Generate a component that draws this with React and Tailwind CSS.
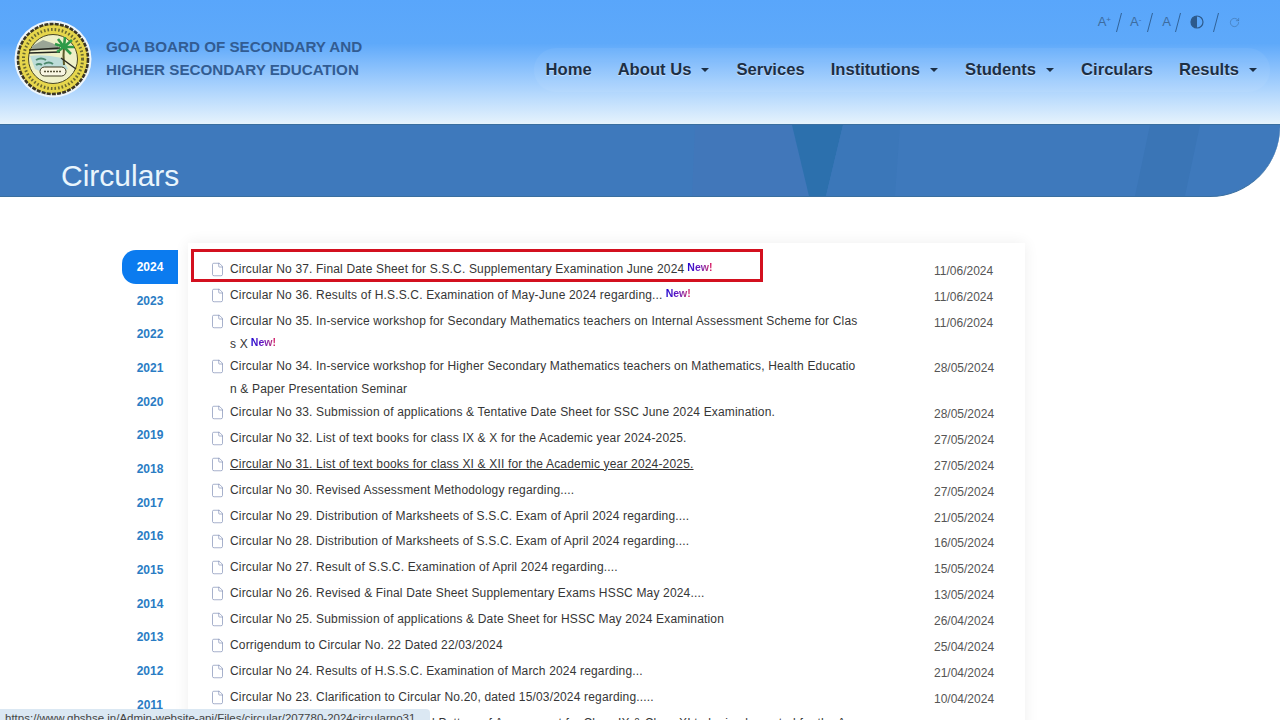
import { File, RotateCw } from 'lucide-react';

const years = [2024, 2023, 2022, 2021, 2020, 2019, 2018, 2017, 2016, 2015, 2014, 2013, 2012, 2011, 2010];

const circulars = [
    { title: 'Circular No 37. Final Date Sheet for S.S.C. Supplementary Examination June 2024', date: '11/06/2024', isNew: true },
    { title: 'Circular No 36. Results of H.S.S.C. Examination of May-June 2024 regarding...', date: '11/06/2024', isNew: true },
    { title: 'Circular No 35. In-service workshop for Secondary Mathematics teachers on Internal Assessment Scheme for Class X', date: '11/06/2024', isNew: true },
    { title: 'Circular No 34. In-service workshop for Higher Secondary Mathematics teachers on Mathematics, Health Education & Paper Presentation Seminar', date: '28/05/2024' },
    { title: 'Circular No 33. Submission of applications & Tentative Date Sheet for SSC June 2024 Examination.', date: '28/05/2024' },
    { title: 'Circular No 32. List of text books for class IX & X for the Academic year 2024-2025.', date: '27/05/2024' },
    { title: 'Circular No 31. List of text books for class XI & XII for the Academic year 2024-2025.', date: '27/05/2024', hover: true },
    { title: 'Circular No 30. Revised Assessment Methodology regarding....', date: '27/05/2024' },
    { title: 'Circular No 29. Distribution of Marksheets of S.S.C. Exam of April 2024 regarding....', date: '21/05/2024' },
    { title: 'Circular No 28. Distribution of Marksheets of S.S.C. Exam of April 2024 regarding....', date: '16/05/2024' },
    { title: 'Circular No 27. Result of S.S.C. Examination of April 2024 regarding....', date: '15/05/2024' },
    { title: 'Circular No 26. Revised & Final Date Sheet Supplementary Exams HSSC May 2024....', date: '13/05/2024' },
    { title: 'Circular No 25. Submission of applications & Date Sheet for HSSC May 2024 Examination', date: '26/04/2024' },
    { title: 'Corrigendum to Circular No. 22 Dated 22/03/2024', date: '25/04/2024' },
    { title: 'Circular No 24. Results of H.S.S.C. Examination of March 2024 regarding...', date: '21/04/2024' },
    { title: 'Circular No 23. Clarification to Circular No.20, dated 15/03/2024 regarding.....', date: '10/04/2024' },
    { title: 'Circular No 22. Revised Syllabus and Pattern of Assessment for Class IX & Class XI to be implemented for the A', date: '22/03/2024' },
];

const navItems = [
    { label: 'Home' },
    { label: 'About Us', caret: true },
    { label: 'Services' },
    { label: 'Institutions', caret: true },
    { label: 'Students', caret: true },
    { label: 'Circulars' },
    { label: 'Results', caret: true },
];

const Logo = () => (
    <svg width="78" height="80" viewBox="0 -1 78 80" className="shrink-0">
        <circle cx="39" cy="40" r="38.5" fill="#eef5fa" />
        <circle cx="39" cy="40" r="35" fill="#e6d64c" stroke="#3a3524" strokeWidth="2.6" strokeDasharray="4 1.2" />
        <circle cx="39" cy="40" r="29.5" fill="none" stroke="#6b6a30" strokeWidth="3" strokeDasharray="1.6 2" />
        <circle cx="39" cy="40" r="24.5" fill="#eef0c8" stroke="#4a4722" strokeWidth="1" />
        <path d="M18 27 L29 21 L38 24 L44 27 L44 31 L18 31 Z" fill="#9aa596" />
        <path d="M15 31 L46 29 M15 34 L46 33" stroke="#24261f" strokeWidth="1.7" />
        <path d="M16 37 Q30 35 48 39 L54 50 Q36 58 21 50 Z" fill="#bcdcd8" />
        <path d="M22 41 q5 -3 10 0 M30 45 q5 -3 9 0 M22 46 q3 -2 6 0" stroke="#4d8a6e" strokeWidth="2" fill="none" />
        <path d="M50 46 Q49 36 50 28" stroke="#5b5a2a" strokeWidth="2" fill="none" />
        <path d="M50 28 L41 25 M50 28 L44 20 M50 28 L51 18 M50 28 L58 21 M50 28 L60 28 M50 28 L57 35 M50 28 L43 33" stroke="#2f9a48" strokeWidth="2.6" />
        <path d="M47 39 L62 50" stroke="#2b2a22" strokeWidth="1.4" />
        <rect x="26" y="48" width="26" height="9" rx="4.5" fill="#f8f6e2" stroke="#3d3a20" strokeWidth="1" />
        <path d="M30 52.5 H48" stroke="#55523a" strokeWidth="1.6" strokeDasharray="2 1" />
    </svg>
);

const Slash = ({ className }) => (
    <svg width="6" height="19" viewBox="0 0 6 19" className={className}>
        <path d="M5.5 0 L0.5 19" stroke="#2d5a8c" strokeWidth="0.9" />
    </svg>
);

const AccessibilityTools = () => (
    <div className="flex items-center text-[#3d6c9f] h-[20px] text-[13px] mr-[40px]">
        <span>A<sup className="text-[8px]">+</sup></span>
        <Slash className="ml-[5px]" />
        <span className="ml-[8px]">A<sup className="text-[8px]">-</sup></span>
        <Slash className="ml-[6px]" />
        <span className="ml-[9px]">A</span>
        <Slash className="ml-[4px]" />
        <svg width="14" height="14" viewBox="0 0 14 14" className="ml-[9px]">
            <circle cx="7" cy="7" r="6" fill="none" stroke="#2d5a8c" strokeWidth="1.2" />
            <path d="M7 1 A6 6 0 0 0 7 13 Z" fill="#2d5a8c" />
        </svg>
        <Slash className="ml-[9px]" />
        <RotateCw size={11} strokeWidth={1.2} className="ml-[10px]" />
    </div>
);

const BannerShapes = () => (
    <svg className="absolute inset-0 w-full h-full" viewBox="0 0 1280 73" preserveAspectRatio="none">
        <polygon points="695,0 792,0 809,73 692,73" fill="#4177ba" />
        <polygon points="792,0 843,0 826,73 809,73" fill="#2c70ad" />
        <polygon points="843,0 900,0 895,73 826,73" fill="#3b77b9" />
        <polygon points="1150,0 1200,0 1185,73 1135,73" fill="#3a75b6" />
    </svg>
);

const App = () => {
    return (
        <div className="relative h-screen overflow-hidden bg-white font-['Liberation_Sans',Arial,sans-serif]">
            {/* Header */}
            <header className="h-[124px] flex justify-between bg-gradient-to-b from-[#59a6fb] via-[#5ea9fa] via-35% to-[#e6f3fc]">
                <div className="flex items-center gap-[14px] pl-[14px] pb-[8px]">
                    <Logo />
                    <div className="text-[#325c92] font-bold text-[15.2px] leading-[23px] mb-[1px] whitespace-nowrap">
                        <div>GOA BOARD OF SECONDARY AND</div>
                        <div>HIGHER SECONDARY EDUCATION</div>
                    </div>
                </div>
                <div className="flex flex-col items-end pt-[12px]">
                    <AccessibilityTools />
                    <nav className="mt-[16px] mr-[10px] h-[44px] pl-[12px] pr-[12px] flex items-center gap-[26px] rounded-[22px] bg-white/5">
                        {navItems.map((item) => (
                            <a key={item.label} href="#" className="flex items-center text-[16.6px] font-bold text-[#1c2f45] whitespace-nowrap [text-shadow:0_1px_1px_rgba(255,255,255,0.5)]">
                                {item.label}
                                {item.caret && <span className="ml-[10px] mr-[1px] w-0 h-0 border-x-[4px] border-x-transparent border-t-[4px] border-t-[#1c2f45]"></span>}
                            </a>
                        ))}
                    </nav>
                </div>
            </header>

            {/* Banner */}
            <div className="relative h-[73px] overflow-hidden bg-[#3e79bc] rounded-br-[70px] border-y border-[#3a6f9f]">
                <BannerShapes />
                <h1 className="relative pl-[61px] pt-[34px] text-[30px] leading-[34px] text-[#e9f5fc]">Circulars</h1>
            </div>

            {/* Content */}
            <div className="flex pl-[122px] pt-[46px]">
                <div className="w-[56px] pt-[7px] shrink-0">
                    {years.map((year, index) => (
                        <div
                            key={year}
                            className={`h-[33.7px] flex items-center justify-center text-[12px] font-bold ${index === 0 ? 'bg-[#0b7bef] text-white rounded-l-[14px]' : 'text-[#2a7cc4]'}`}
                        >
                            {year}
                        </div>
                    ))}
                </div>
                <div className="ml-[10px] w-[837px] pt-[15px] shrink-0 bg-white shadow-[0_0_14px_rgba(0,0,0,0.07)]">
                    {circulars.map((item) => (
                        <div key={item.title} className="flex min-h-[25.9px] pl-[22px]">
                            <File size={15} strokeWidth={1.1} className="mt-[4px] shrink-0 text-[#7f8db5]" />
                            <a href="#" className={`ml-[5px] w-[628px] text-[12px] leading-[22.8px] break-all text-[#363636] tracking-[0.17px] ${item.hover ? 'underline' : ''}`}>
                                {item.title}
                                {item.isNew && <span className="ml-[3px] inline-block -translate-y-[2px] text-[10.5px] font-bold bg-gradient-to-r from-[#1a00d0] via-[#6a12c0] to-[#e0105c] bg-clip-text text-transparent tracking-normal">New!</span>}
                            </a>
                            <span className="ml-[76px] pt-[4px] text-[12px] leading-[18.8px] text-[#555555]">{item.date}</span>
                        </div>
                    ))}
                </div>
            </div>

            {/* Red highlight around the first row */}
            <div className="absolute left-[191px] top-[249px] w-[572px] h-[33px] border-[3px] border-[#d3101f]"></div>

            {/* Browser link preview */}
            <div className="absolute left-0 bottom-0 w-[430px] h-[11px] overflow-hidden bg-[#dbe8f3] rounded-tr-[4px] pl-[5px] text-[11.5px] leading-[18px] text-[#444444] whitespace-nowrap">
                https://www.gbshse.in/Admin-website-api/Files/circular/207780-2024circularno31
            </div>
        </div>
    );
};

export default App;
